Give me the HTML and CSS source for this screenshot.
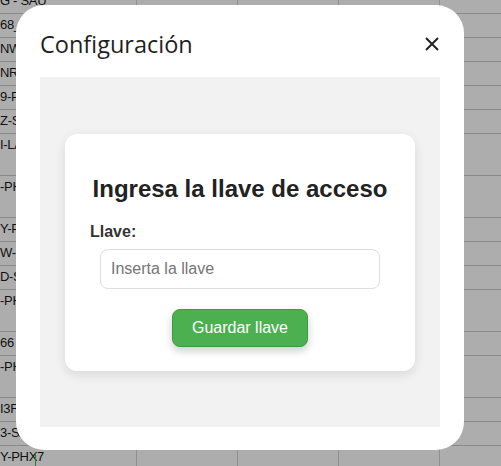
FILE: index.html
```html
<!DOCTYPE html>
<html lang="es">
<head>
<meta charset="utf-8">
<title>Configuración</title>
<link rel="stylesheet" href="styles.css">
</head>
<body>
<div class="sheet">
  <div class="row"><div class="cell first">G - SAU</div><div class="cell"></div><div class="cell"></div><div class="cell"></div><div class="cell"></div></div>
  <div class="row"><div class="cell first">68_</div><div class="cell"></div><div class="cell"></div><div class="cell"></div><div class="cell"></div></div>
  <div class="row"><div class="cell first">NW</div><div class="cell"></div><div class="cell"></div><div class="cell"></div><div class="cell"></div></div>
  <div class="row"><div class="cell first">NR</div><div class="cell"></div><div class="cell"></div><div class="cell"></div><div class="cell"></div></div>
  <div class="row"><div class="cell first">9-P</div><div class="cell"></div><div class="cell"></div><div class="cell"></div><div class="cell"></div></div>
  <div class="row"><div class="cell first">Z-SA</div><div class="cell"></div><div class="cell"></div><div class="cell"></div><div class="cell"></div></div>
  <div class="row double"><div class="cell first">I-LA</div><div class="cell"></div><div class="cell"></div><div class="cell"></div><div class="cell"></div></div>
  <div class="row double"><div class="cell first">-PH</div><div class="cell"></div><div class="cell"></div><div class="cell"></div><div class="cell"></div></div>
  <div class="row"><div class="cell first">Y-P</div><div class="cell"></div><div class="cell"></div><div class="cell"></div><div class="cell"></div></div>
  <div class="row"><div class="cell first">W-</div><div class="cell"></div><div class="cell"></div><div class="cell"></div><div class="cell"></div></div>
  <div class="row"><div class="cell first">D-S</div><div class="cell"></div><div class="cell"></div><div class="cell"></div><div class="cell"></div></div>
  <div class="row double"><div class="cell first">-PH</div><div class="cell"></div><div class="cell"></div><div class="cell"></div><div class="cell"></div></div>
  <div class="row"><div class="cell first">66</div><div class="cell"></div><div class="cell"></div><div class="cell"></div><div class="cell"></div></div>
  <div class="row double"><div class="cell first">-PH</div><div class="cell"></div><div class="cell"></div><div class="cell"></div><div class="cell"></div></div>
  <div class="row"><div class="cell first">I3F</div><div class="cell"></div><div class="cell"></div><div class="cell"></div><div class="cell"></div></div>
  <div class="row"><div class="cell first">3-SA</div><div class="cell"></div><div class="cell"></div><div class="cell"></div><div class="cell"></div></div>
  <div class="row"><div class="cell first cursor">Y-PHX7</div><div class="cell"></div><div class="cell"></div><div class="cell"></div><div class="cell"></div></div>
</div>

<div class="modal">
  <div class="modal-header">
    <h1 class="modal-title">Configuración</h1>
    <button class="close" aria-label="Cerrar">
      <svg width="14" height="14" viewBox="0 0 14 14"><path d="M1 1L13 13M13 1L1 13" stroke="#222" stroke-width="2" fill="none"/></svg>
    </button>
  </div>
  <div class="modal-body">
    <div class="card">
      <h2 class="card-title">Ingresa la llave de acceso</h2>
      <label class="field-label" for="key">Llave:</label>
      <input class="field-input" id="key" type="text" placeholder="Inserta la llave">
      <button class="save">Guardar llave</button>
    </div>
  </div>
</div>
</body>
</html>
```

FILE: styles.css
```css
html, body {
  margin: 0;
  padding: 0;
}
body {
  background: #adadad;
  overflow: hidden;
  height: 466px;
  position: relative;
}
.sheet {
  margin-top: -10px;
  font-family: "Liberation Sans", Arial, sans-serif;
  font-size: 13px;
  color: #111;
}
.row {
  display: grid;
  grid-template-columns: 137px 101px 101px 101px 1fr;
  height: 24px;
  box-sizing: border-box;
  border-bottom: 1px solid #8a8a8a;
}
.row.double {
  height: 42px;
}
.cell {
  border-right: 1px solid #8f8f8f;
  line-height: 22px;
  white-space: nowrap;
  overflow: hidden;
}
.cell:last-child {
  border-right: none;
}
.first {
  letter-spacing: -0.3px;
  position: relative;
}
.cursor::after {
  content: "";
  position: absolute;
  left: 35px;
  top: 6px;
  width: 1px;
  height: 18px;
  background: #2e7d32;
}

.modal {
  position: absolute;
  left: 16px;
  top: 5px;
  width: 448px;
  height: 445px;
  box-sizing: border-box;
  padding: 0 24px 23px;
  background: #fff;
  border-radius: 28px;
  display: flex;
  flex-direction: column;
}
.modal-header {
  height: 72px;
  flex: none;
  display: flex;
  align-items: center;
  justify-content: space-between;
  padding-top: 6px;
  box-sizing: border-box;
}
.modal-title {
  margin: 0;
  font-family: "Open Sans", sans-serif;
  font-weight: 400;
  font-size: 23.5px;
  color: #1f1f1f;
}
.close {
  background: none;
  border: none;
  padding: 0;
  width: 14px;
  height: 14px;
  margin-right: 1px;
  display: flex;
}
.modal-body {
  flex: 1;
  background: #f2f2f2;
  display: flex;
  align-items: center;
  justify-content: center;
}
.card {
  width: 350px;
  box-sizing: border-box;
  padding: 21px 25px 24px;
  background: #fff;
  border-radius: 12px;
  box-shadow: 0 4px 12px rgba(0, 0, 0, 0.1);
  display: flex;
  flex-direction: column;
  font-family: "Liberation Sans", Arial, sans-serif;
}
.card-title {
  margin: 20px 0 20px;
  font-size: 24px;
  font-weight: 700;
  text-align: center;
  color: #222;
}
.field-label {
  font-size: 16px;
  font-weight: 700;
  color: #333;
  margin-bottom: 8px;
}
.field-input {
  align-self: center;
  width: 280px;
  height: 40px;
  box-sizing: border-box;
  border: 1px solid #ddd;
  border-radius: 8px;
  padding: 0 10px;
  font-family: "Liberation Sans", Arial, sans-serif;
  font-size: 16px;
  color: #333;
  margin: 0 0 20px;
  outline: none;
}
.field-input::placeholder {
  color: #757575;
}
.save {
  align-self: center;
  background: #4caf50;
  color: #fff;
  border: 1px solid #3b9c3f;
  border-radius: 8px;
  padding: 9px 19px;
  font-family: "Liberation Sans", Arial, sans-serif;
  font-size: 16px;
  line-height: 18px;
  box-shadow: 0 4px 8px rgba(0, 0, 0, 0.2);
}
```
